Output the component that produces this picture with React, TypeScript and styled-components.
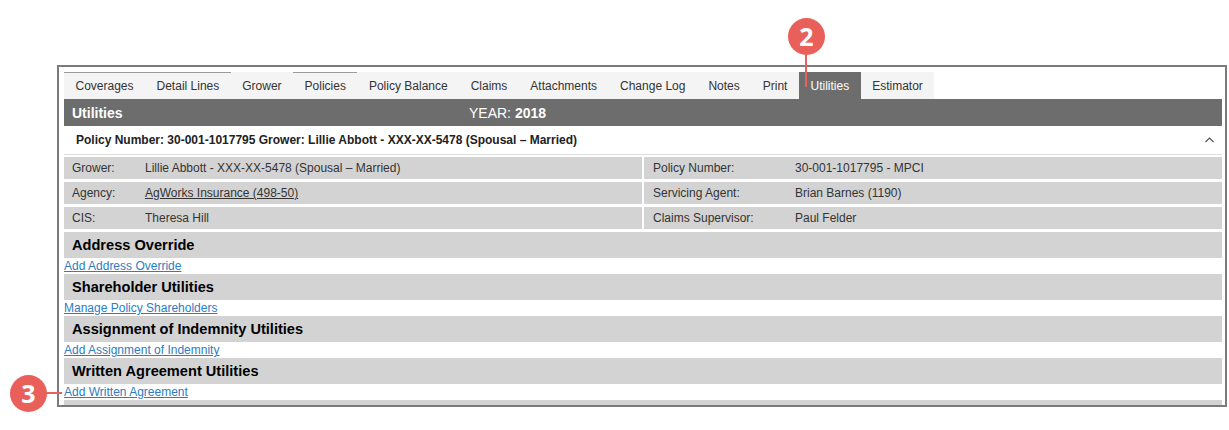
import React from 'react';
import styled, { createGlobalStyle } from 'styled-components';

const GlobalStyle = createGlobalStyle`
  body {
    margin: 0;
    background: #fff;
    font-family: "Liberation Sans", Arial, sans-serif;
  }
`;

const Page = styled.div`
  position: relative;
  width: 1229px;
  height: 430px;
  overflow: hidden;
`;

const Frame = styled.div`
  box-sizing: border-box;
  margin: 65px 0 0 57px;
  width: 1170px;
  height: 342px;
  border: 2px solid #7b7b7b;
  padding: 5px 3px 0 5px;
  overflow: hidden;
`;

const TabBar = styled.div`
  display: flex;
  height: 27px;
`;

const Tab = styled.div<{ $active?: boolean; $lined?: boolean }>`
  padding: 1px 11.5px 0;
  line-height: 26px;
  font-size: 12px;
  color: ${p => (p.$active ? '#fff' : '#333')};
  background: ${p => (p.$active ? '#6d6d6d' : '#f4f4f4')};
  box-shadow: ${p => (p.$lined ? 'inset 0 1px 0 #9c9c9c' : 'none')};
  white-space: nowrap;
`;

const HeaderBar = styled.div`
  display: flex;
  align-items: center;
  height: 27px;
  padding-left: 8px;
  background: #6d6d6d;
  color: #fff;
  font-size: 14px;
`;

const HeaderTitle = styled.div`
  width: 397px;
  font-weight: bold;
`;

const Year = styled.div`
  b {
    font-weight: bold;
  }
`;

const PolicyLine = styled.div`
  display: flex;
  align-items: center;
  justify-content: space-between;
  height: 28px;
  padding: 0 8px 0 12px;
  border-bottom: 1px solid #dddddd;
  margin-bottom: 2px;
  font-size: 12px;
  font-weight: bold;
  color: #222;
`;

const InfoGrid = styled.div`
  display: grid;
  grid-template-columns: 1fr 1fr;
  column-gap: 2px;
  row-gap: 3px;
`;

const InfoCell = styled.div`
  display: flex;
  align-items: center;
  height: 22px;
  background: #d3d3d3;
  font-size: 12px;
  color: #333;
`;

const Label = styled.div<{ $pad: number; $width: number }>`
  box-sizing: border-box;
  padding-left: ${p => p.$pad}px;
  width: ${p => p.$width}px;
  flex-shrink: 0;
`;

const Value = styled.div<{ $link?: boolean }>`
  text-decoration: ${p => (p.$link ? 'underline' : 'none')};
`;

const Sections = styled.div`
  margin-top: 3px;
`;

const SectionHeader = styled.div`
  height: 26px;
  line-height: 27px;
  padding-left: 8px;
  background: #d3d3d3;
  font-size: 14.6px;
  font-weight: bold;
  color: #000;
`;

const LinkLine = styled.div`
  height: 16px;
  line-height: 17px;
  font-size: 12px;
`;

const Link = styled.a`
  color: #2d7cc4;
  text-decoration: underline;
  cursor: pointer;
`;

const Marker = styled.div<{ $x: number; $y: number }>`
  position: absolute;
  left: ${p => p.$x}px;
  top: ${p => p.$y}px;
  width: 37px;
  height: 37px;
  border-radius: 50%;
  background: #e9605a;
  color: #fff;
  font-family: "Open Sans", "Liberation Sans", sans-serif;
  font-weight: bold;
  font-size: 25px;
  line-height: 37px;
  text-align: center;
`;

const Leader = styled.div<{ $x: number; $y: number; $w: number; $h: number }>`
  position: absolute;
  left: ${p => p.$x}px;
  top: ${p => p.$y}px;
  width: ${p => p.$w}px;
  height: ${p => p.$h}px;
  background: #e9605a;
`;

const tabs = [
  { name: 'Coverages', lined: true },
  { name: 'Detail Lines', lined: true },
  { name: 'Grower' },
  { name: 'Policies', lined: true },
  { name: 'Policy Balance' },
  { name: 'Claims' },
  { name: 'Attachments' },
  { name: 'Change Log' },
  { name: 'Notes' },
  { name: 'Print' },
  { name: 'Utilities', active: true },
  { name: 'Estimator' },
];

const info = [
  { label: 'Grower:', value: 'Lillie Abbott - XXX-XX-5478 (Spousal – Married)' },
  { label: 'Policy Number:', value: '30-001-1017795 - MPCI', right: true },
  { label: 'Agency:', value: 'AgWorks Insurance (498-50)', link: true },
  { label: 'Servicing Agent:', value: 'Brian Barnes (1190)', right: true },
  { label: 'CIS:', value: 'Theresa Hill' },
  { label: 'Claims Supervisor:', value: 'Paul Felder', right: true },
];

const sections = [
  { title: 'Address Override', link: 'Add Address Override' },
  { title: 'Shareholder Utilities', link: 'Manage Policy Shareholders' },
  { title: 'Assignment of Indemnity Utilities', link: 'Add Assignment of Indemnity' },
  { title: 'Written Agreement Utilities', link: 'Add Written Agreement' },
];

export default function App() {
  return (
    <Page>
      <GlobalStyle />
      <Frame>
        <TabBar>
          {tabs.map(t => (
            <Tab key={t.name} $active={t.active} $lined={t.lined}>
              {t.name}
            </Tab>
          ))}
        </TabBar>
        <HeaderBar>
          <HeaderTitle>Utilities</HeaderTitle>
          <Year>
            YEAR: <b>2018</b>
          </Year>
        </HeaderBar>
        <PolicyLine>
          <span>Policy Number: 30-001-1017795 Grower: Lillie Abbott - XXX-XX-5478 (Spousal – Married)</span>
          <svg width="9" height="6" viewBox="0 0 9 6">
            <polyline points="0.5,5 4.5,1 8.5,5" fill="none" stroke="#555" strokeWidth="1.2" />
          </svg>
        </PolicyLine>
        <InfoGrid>
          {info.map(r => (
            <InfoCell key={r.label}>
              <Label $pad={r.right ? 9 : 8} $width={r.right ? 151 : 81}>
                {r.label}
              </Label>
              <Value $link={r.link}>{r.value}</Value>
            </InfoCell>
          ))}
        </InfoGrid>
        <Sections>
          {sections.map(s => (
            <React.Fragment key={s.title}>
              <SectionHeader>{s.title}</SectionHeader>
              <LinkLine>
                <Link>{s.link}</Link>
              </LinkLine>
            </React.Fragment>
          ))}
          <SectionHeader />
        </Sections>
      </Frame>
      <Leader $x={805} $y={55} $w={2} $h={32} />
      <Marker $x={788} $y={18}>2</Marker>
      <Leader $x={45} $y={392} $w={17} $h={2} />
      <Marker $x={10} $y={375}>3</Marker>
    </Page>
  );
}
